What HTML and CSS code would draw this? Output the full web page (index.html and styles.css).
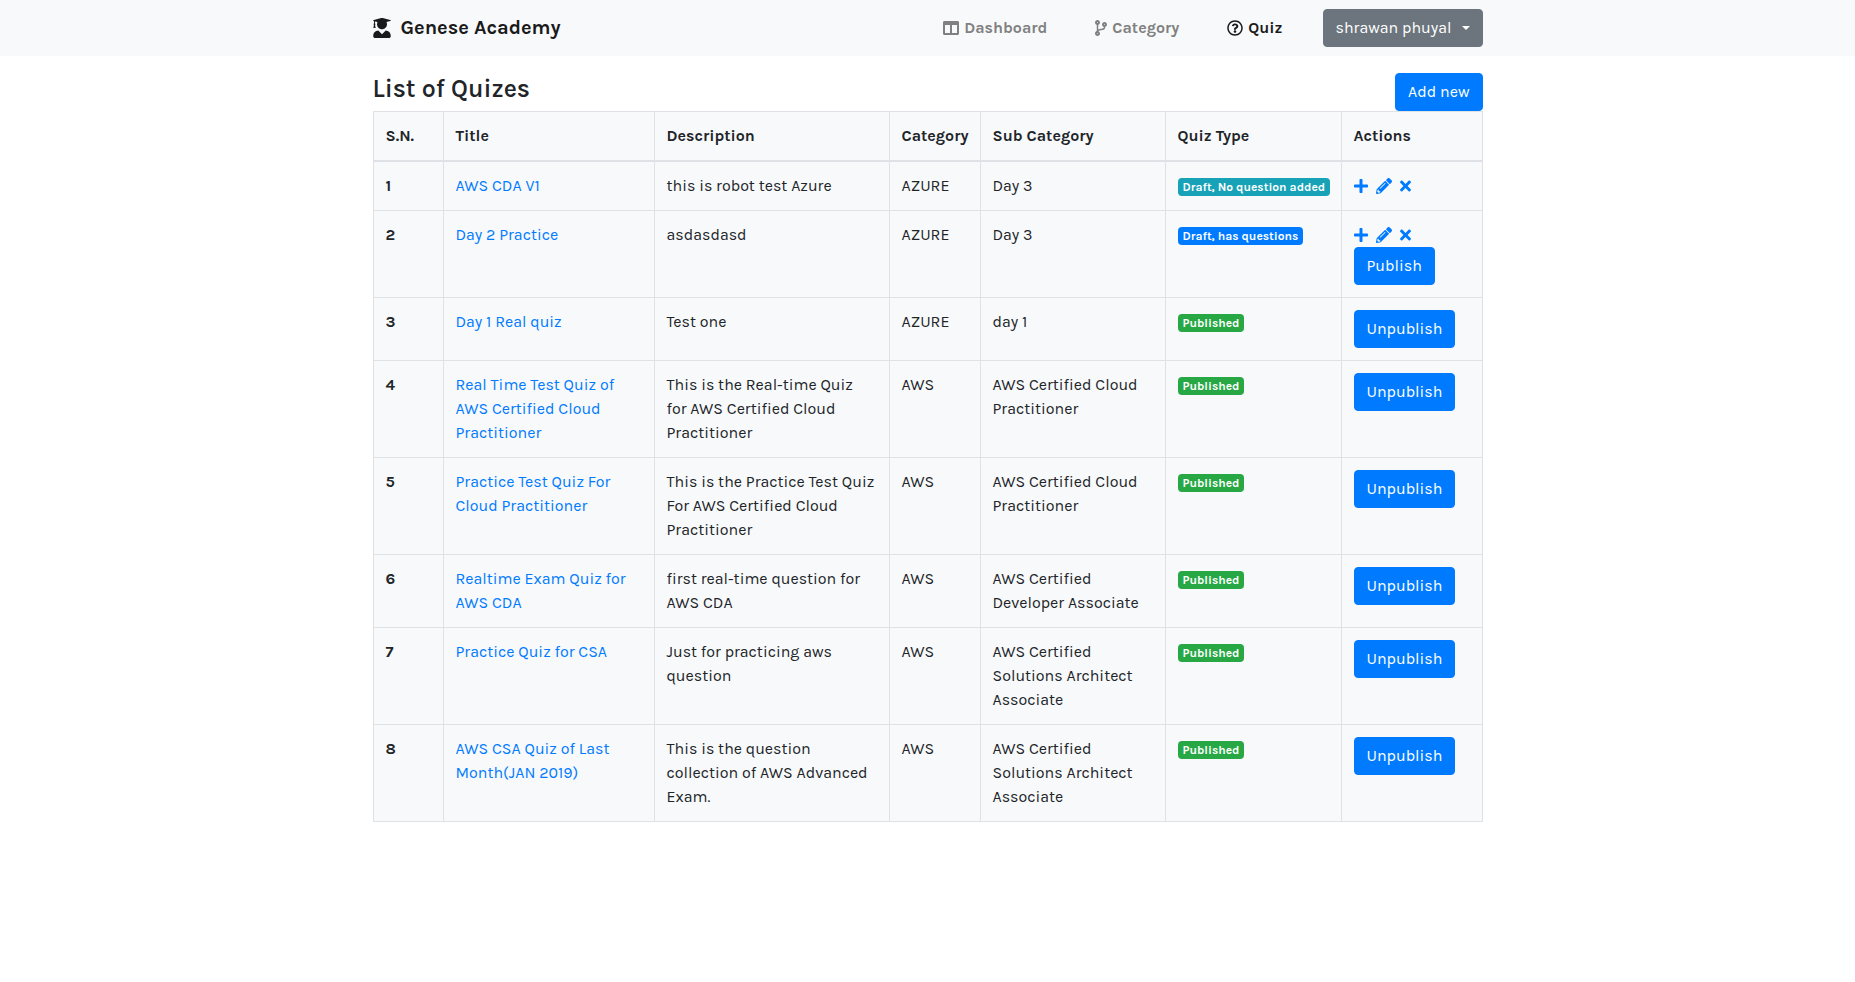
FILE: index.html
```html
<!DOCTYPE html>
<html lang="en">
<head>
<meta charset="utf-8">
<meta name="viewport" content="width=device-width, initial-scale=1">
<title>Genese Academy</title>
<link rel="stylesheet" href="styles.css">
</head>
<body>
<svg class="sprite" aria-hidden="true">
  <symbol id="graduate" viewBox="0 0 448 512"><path d="M319.4 320.6L224 416l-95.4-95.4C57.1 323.7 0 382.2 0 454.4v9.6c0 26.5 21.5 48 48 48h352c26.5 0 48-21.5 48-48v-9.6c0-72.2-57.1-130.7-128.6-133.8zM13.6 79.8l6.4 1.5v58.4c-7 4.2-12 11.5-12 20.3 0 8.4 4.6 15.4 11.1 19.7L3.5 242c-1.7 6.9 2.1 14 7.6 14h41.8c5.5 0 9.3-7.1 7.6-14l-15.6-62.3C51.4 175.4 56 168.4 56 160c0-8.8-5-16.1-12-20.3V87.1l66 15.9c-8.6 17.2-14 36.4-14 57 0 70.7 57.3 128 128 128s128-57.3 128-128c0-20.6-5.3-39.8-14-57l96.3-23.2c18.2-4.4 18.2-27.1 0-31.5l-190.4-46c-13-3.1-26.7-3.1-39.7 0L13.6 48.2c-18.1 4.4-18.1 27.2 0 31.6z"/></symbol>
  <symbol id="columns" viewBox="0 0 512 512"><path d="M464 32H48C21.49 32 0 53.49 0 80v352c0 26.51 21.49 48 48 48h416c26.51 0 48-21.49 48-48V80c0-26.51-21.49-48-48-48zM224 416H64V160h160v256zm224 0H288V160h160v256z"/></symbol>
  <symbol id="branch" viewBox="0 0 384 512"><path d="M384 144c0-44.2-35.8-80-80-80s-80 35.8-80 80c0 36.4 24.3 67.1 57.5 76.8-.6 16.1-4.2 28.5-11 36.9-15.4 19.2-49.3 22.4-85.2 25.7-28.2 2.6-57.4 5.4-81.3 16.9v-144c32.5-10.2 56-40.5 56-76.3 0-44.2-35.8-80-80-80S0 35.8 0 80c0 35.8 23.5 66.1 56 76.3v199.3C23.5 365.9 0 396.2 0 432c0 44.2 35.8 80 80 80s80-35.8 80-80c0-34-21.2-63.1-51.2-74.6 3.1-5.2 7.8-9.8 14.9-13.4 16.2-8.2 40.4-10.4 66.1-12.8 42.2-3.9 90-8.4 118.2-43.4 14-17.4 21.1-39.8 21.6-67.9 31.6-10.8 54.4-40.7 54.4-75.9zM80 64c8.8 0 16 7.2 16 16s-7.2 16-16 16-16-7.2-16-16 7.2-16 16-16zm0 384c-8.8 0-16-7.2-16-16s7.2-16 16-16 16 7.2 16 16-7.2 16-16 16zm224-320c8.8 0 16 7.2 16 16s-7.2 16-16 16-16-7.2-16-16 7.2-16 16-16z"/></symbol>
  <symbol id="question" viewBox="0 0 512 512"><path d="M256 8C119.043 8 8 119.083 8 256c0 136.997 111.043 248 248 248s248-111.003 248-248C504 119.083 392.957 8 256 8zm0 448c-110.532 0-200-89.431-200-200 0-110.495 89.472-200 200-200 110.491 0 200 89.471 200 200 0 110.53-89.431 200-200 200zm107.244-255.2c0 67.052-72.421 68.084-72.421 92.863V300c0 6.627-5.373 12-12 12h-45.647c-6.627 0-12-5.373-12-12v-8.659c0-35.745 27.1-50.034 47.579-61.516 17.561-9.845 28.324-16.541 28.324-29.579 0-17.246-21.999-28.693-39.784-28.693-23.189 0-33.894 10.977-48.942 29.969-4.057 5.12-11.46 6.071-16.666 2.124l-27.824-21.098c-5.107-3.872-6.251-11.066-2.644-16.363C184.846 131.491 214.94 112 261.794 112c49.071 0 101.45 38.304 101.45 88.8zM298 368c0 23.159-18.841 42-42 42s-42-18.841-42-42 18.841-42 42-42 42 18.841 42 42z"/></symbol>
  <symbol id="plus" viewBox="0 0 448 512"><path d="M416 208H272V64c0-17.67-14.33-32-32-32h-32c-17.67 0-32 14.33-32 32v144H32c-17.67 0-32 14.33-32 32v32c0 17.67 14.33 32 32 32h144v144c0 17.67 14.33 32 32 32h32c17.67 0 32-14.33 32-32V304h144c17.67 0 32-14.33 32-32v-32c0-17.67-14.33-32-32-32z"/></symbol>
  <symbol id="pencil" viewBox="0 0 512 512"><path d="M497.9 142.1l-46.1 46.1c-4.7 4.7-12.3 4.7-17 0l-111-111c-4.7-4.7-4.7-12.3 0-17l46.1-46.1c18.7-18.7 49.1-18.7 67.9 0l60.1 60.1c18.8 18.7 18.8 49.1 0 67.9zM284.2 99.8L21.6 362.4.4 483.9c-2.9 16.4 11.4 30.6 27.8 27.8l121.5-21.3 262.6-262.6c4.7-4.7 4.7-12.3 0-17l-111-111c-4.8-4.7-12.4-4.7-17.1 0zM124.1 339.9c-5.5-5.5-5.5-14.3 0-19.8l154-154c5.5-5.5 14.3-5.5 19.8 0s5.5 14.3 0 19.8l-154 154c-5.5 5.5-14.3 5.5-19.8 0zM88 424h48v36.3l-64.5 11.3-31.1-31.1L51.7 376H88v48z"/></symbol>
  <symbol id="times" viewBox="0 0 352 512"><path d="M242.72 256l100.07-100.07c12.28-12.28 12.28-32.19 0-44.48l-22.24-22.24c-12.28-12.28-32.19-12.28-44.48 0L176 189.28 75.93 89.21c-12.28-12.28-32.19-12.28-44.48 0L9.21 111.45c-12.28 12.28-12.28 32.19 0 44.48L109.28 256 9.21 356.07c-12.28 12.28-12.28 32.19 0 44.48l22.24 22.24c12.28 12.28 32.2 12.28 44.48 0L176 322.72l100.07 100.07c12.28 12.28 32.2 12.28 44.48 0l22.24-22.24c12.28-12.28 12.28-32.19 0-44.48L242.72 256z"/></symbol>
</svg>
<header class="navbar">
  <div class="container navbar-inner">
    <a class="brand" href="#"><svg class="brand-icon"><use href="#graduate"/></svg>Genese Academy</a>
    <nav class="nav">
      <a class="nav-link" href="#"><svg class="icon"><use href="#columns"/></svg>Dashboard</a>
      <a class="nav-link" href="#"><svg class="icon icon-narrow"><use href="#branch"/></svg>Category</a>
      <a class="nav-link active" href="#"><svg class="icon"><use href="#question"/></svg>Quiz</a>
    </nav>
    <button class="btn btn-secondary" type="button">shrawan phuyal<span class="caret"></span></button>
  </div>
</header>
<main class="container">
  <div class="page-head">
    <h1 class="page-title">List of Quizes</h1>
    <button class="btn" type="button">Add new</button>
  </div>
  <table class="table">
    <colgroup>
      <col class="col-sn"><col class="col-title"><col><col class="col-category"><col class="col-sub"><col class="col-type"><col class="col-actions">
    </colgroup>
    <thead>
      <tr><th scope="col">S.N.</th><th scope="col">Title</th><th scope="col">Description</th><th scope="col">Category</th><th scope="col">Sub Category</th><th scope="col">Quiz Type</th><th scope="col">Actions</th></tr>
    </thead>
    <tbody>
      <tr>
        <th scope="row">1</th><td><a href="#">AWS CDA V1</a></td><td>this is robot test Azure</td><td>AZURE</td><td>Day 3</td>
        <td><span class="badge badge-info">Draft, No question added</span></td>
        <td><div class="actions"><a href="#" aria-label="Add question"><svg class="icon icon-plus"><use href="#plus"/></svg></a><a href="#" aria-label="Edit"><svg class="icon"><use href="#pencil"/></svg></a><a href="#" aria-label="Delete"><svg class="icon icon-times"><use href="#times"/></svg></a></div></td>
      </tr>
      <tr>
        <th scope="row">2</th><td><a href="#">Day 2 Practice</a></td><td>asdasdasd</td><td>AZURE</td><td>Day 3</td>
        <td><span class="badge badge-primary">Draft, has questions</span></td>
        <td><div class="actions"><a href="#" aria-label="Add question"><svg class="icon icon-plus"><use href="#plus"/></svg></a><a href="#" aria-label="Edit"><svg class="icon"><use href="#pencil"/></svg></a><a href="#" aria-label="Delete"><svg class="icon icon-times"><use href="#times"/></svg></a></div><button class="btn" type="button">Publish</button></td>
      </tr>
      <tr>
        <th scope="row">3</th><td><a href="#">Day 1 Real quiz</a></td><td>Test one</td><td>AZURE</td><td>day 1</td>
        <td><span class="badge">Published</span></td><td><button class="btn" type="button">Unpublish</button></td>
      </tr>
      <tr>
        <th scope="row">4</th><td><a href="#">Real Time Test Quiz of AWS Certified Cloud Practitioner</a></td><td>This is the Real-time Quiz for AWS Certified Cloud Practitioner</td><td>AWS</td><td>AWS Certified Cloud Practitioner</td>
        <td><span class="badge">Published</span></td><td><button class="btn" type="button">Unpublish</button></td>
      </tr>
      <tr>
        <th scope="row">5</th><td><a href="#">Practice Test Quiz For Cloud Practitioner</a></td><td>This is the Practice Test Quiz For AWS Certified Cloud Practitioner</td><td>AWS</td><td>AWS Certified Cloud Practitioner</td>
        <td><span class="badge">Published</span></td><td><button class="btn" type="button">Unpublish</button></td>
      </tr>
      <tr>
        <th scope="row">6</th><td><a href="#">Realtime Exam Quiz for AWS CDA</a></td><td>first real-time question for AWS CDA</td><td>AWS</td><td>AWS Certified Developer Associate</td>
        <td><span class="badge">Published</span></td><td><button class="btn" type="button">Unpublish</button></td>
      </tr>
      <tr>
        <th scope="row">7</th><td><a href="#">Practice Quiz for CSA</a></td><td>Just for practicing aws question</td><td>AWS</td><td>AWS Certified Solutions Architect Associate</td>
        <td><span class="badge">Published</span></td><td><button class="btn" type="button">Unpublish</button></td>
      </tr>
      <tr>
        <th scope="row">8</th><td><a href="#">AWS CSA Quiz of Last Month(JAN 2019)</a></td><td>This is the question collection of AWS Advanced Exam.</td><td>AWS</td><td>AWS Certified Solutions Architect Associate</td>
        <td><span class="badge">Published</span></td><td><button class="btn" type="button">Unpublish</button></td>
      </tr>
    </tbody>
  </table>
</main>
</body>
</html>
```
FILE: styles.css
```css
*, *::before, *::after { box-sizing: border-box; }

body {
  margin: 0;
  background: #fff;
  color: #212529;
  font-family: Karla, Roboto, sans-serif;
  font-size: 16px;
  line-height: 24px;
}

a { color: #007bff; text-decoration: none; }

.sprite { display: none; }

.container {
  width: 100%;
  max-width: 1140px;
  margin: 0 auto;
  padding: 0 15px;
}

.icon { display: block; flex: none; width: 16px; height: 16px; fill: currentColor; }
.icon-narrow { width: 12px; }
.icon-plus { width: 14px; }
.icon-times { width: 11px; }

.navbar { background: #f8f9fa; }
.navbar-inner { display: flex; align-items: center; min-height: 56px; }
.brand {
  display: flex;
  align-items: center;
  gap: 10px;
  margin-right: auto;
  color: #1a1a1a;
  font-size: 20px;
  font-weight: 700;
}
.brand-icon { width: 18px; height: 20px; fill: currentColor; }
.nav { display: flex; gap: 48px; margin-right: 40px; }
.nav-link {
  display: flex;
  align-items: center;
  gap: 5px;
  color: #808080;
  font-weight: 700;
}
.nav-link.active { color: #1a1a1a; }

.btn {
  padding: 6px 12px;
  border: 1px solid #007bff;
  border-radius: 4px;
  background: #007bff;
  color: #fff;
  font: inherit;
  cursor: pointer;
}
.btn-secondary {
  display: flex;
  align-items: center;
  gap: 10px;
  border-color: #6c757d;
  background: #6c757d;
}
.caret { border: 4px solid transparent; border-top-color: #fff; border-bottom: 0; }

.page-head {
  display: flex;
  align-items: flex-start;
  justify-content: space-between;
  padding-top: 17px;
}
.page-title { margin: 0; font-size: 25px; font-weight: 600; line-height: 32px; }

.table {
  width: 100%;
  table-layout: fixed;
  border-collapse: collapse;
  background: #f8f9fa;
}
.table th, .table td {
  padding: 12px;
  border: 1px solid #dee2e6;
  text-align: left;
  vertical-align: top;
}
.table thead th { border-bottom-width: 2px; }
.table .btn { display: block; }
.col-sn { width: 70px; }
.col-title { width: 211px; }
.col-category { width: 91px; }
.col-sub { width: 185px; }
.col-type { width: 176px; }
.col-actions { width: 141px; }

.badge {
  display: inline-block;
  padding: 3px 5px;
  border-radius: 4px;
  background: #28a745;
  color: #fff;
  font-size: 12px;
  font-weight: 700;
  line-height: 12px;
  white-space: nowrap;
}
.badge-info { background: #17a2b8; }
.badge-primary { background: #007bff; }

.actions { display: flex; align-items: center; gap: 8px; height: 24px; }
```
